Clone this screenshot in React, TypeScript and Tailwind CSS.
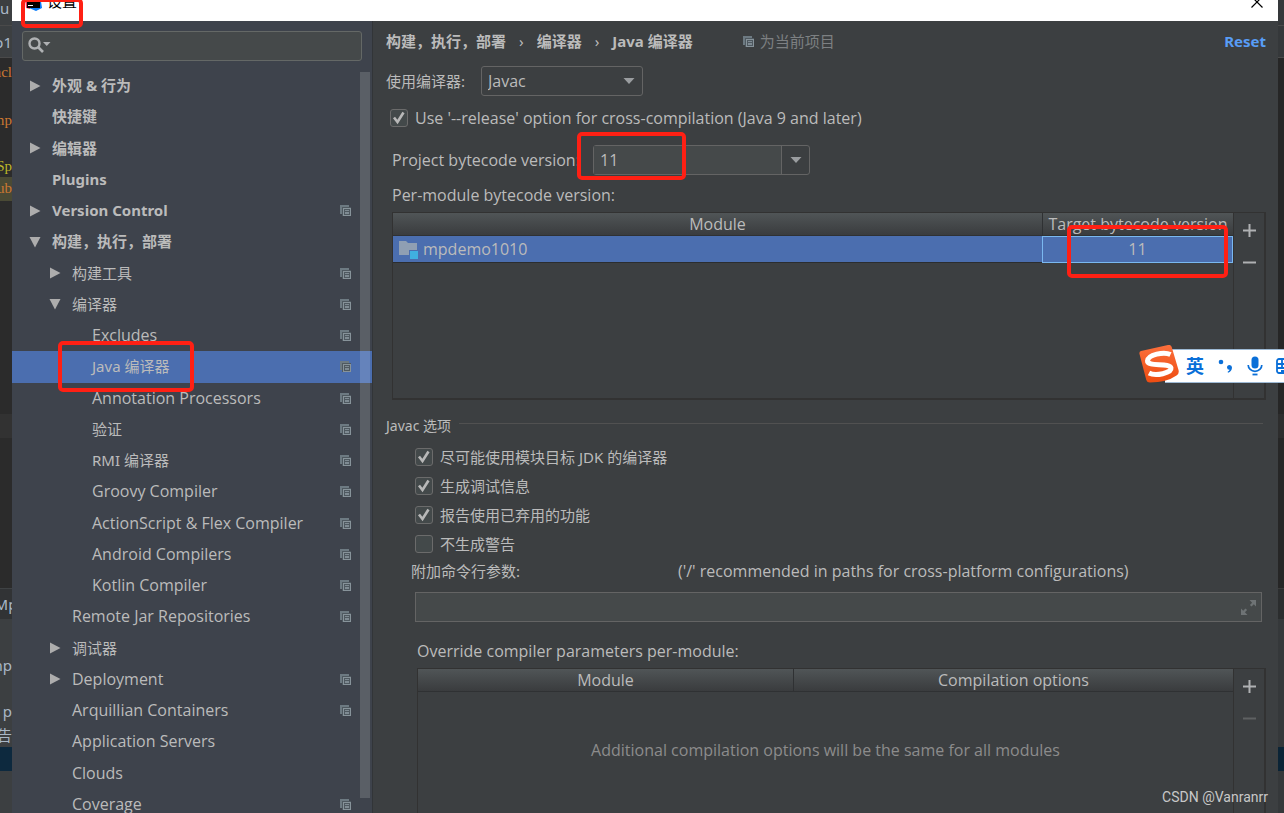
import { useState } from 'react'

interface TreeItem {
  label: string
  level: 0 | 1 | 2
  arrow?: 'open' | 'closed'
  project?: boolean
}

const treeItems: TreeItem[] = [
  { label: '外观 & 行为', level: 0, arrow: 'closed' },
  { label: '快捷键', level: 0 },
  { label: '编辑器', level: 0, arrow: 'closed' },
  { label: 'Plugins', level: 0 },
  { label: 'Version Control', level: 0, arrow: 'closed', project: true },
  { label: '构建，执行，部署', level: 0, arrow: 'open' },
  { label: '构建工具', level: 1, arrow: 'closed', project: true },
  { label: '编译器', level: 1, arrow: 'open', project: true },
  { label: 'Excludes', level: 2, project: true },
  { label: 'Java 编译器', level: 2, project: true },
  { label: 'Annotation Processors', level: 2, project: true },
  { label: '验证', level: 2, project: true },
  { label: 'RMI 编译器', level: 2, project: true },
  { label: 'Groovy Compiler', level: 2, project: true },
  { label: 'ActionScript & Flex Compiler', level: 2, project: true },
  { label: 'Android Compilers', level: 2, project: true },
  { label: 'Kotlin Compiler', level: 2, project: true },
  { label: 'Remote Jar Repositories', level: 1, project: true },
  { label: '调试器', level: 1, arrow: 'closed' },
  { label: 'Deployment', level: 1, arrow: 'closed', project: true },
  { label: 'Arquillian Containers', level: 1, project: true },
  { label: 'Application Servers', level: 1 },
  { label: 'Clouds', level: 1 },
  { label: 'Coverage', level: 1, project: true },
]

const levelPadding = {
  0: 'pl-[17px] font-bold',
  1: 'pl-[37px]',
  2: 'pl-[57px]',
}

const javacOptions = [
  { id: 'target-jdk', label: '尽可能使用模块目标 JDK 的编译器', checked: true },
  { id: 'debug-info', label: '生成调试信息', checked: true },
  { id: 'deprecated', label: '报告使用已弃用的功能', checked: true },
  { id: 'no-warnings', label: '不生成警告', checked: false },
]

// Chinese labels are set a pixel smaller than the English ones
const latinText = "font-['Open_Sans',sans-serif] text-[16px]"
const isLatin = (text: string) => /^[ -~]+$/.test(text)

function ProjectIcon() {
  return (
    <svg className="h-[11px] w-[11px] shrink-0" viewBox="0 0 11 11" fill="none" shapeRendering="crispEdges" aria-hidden="true">
      <path d="M0 0h9v2h-7v7h-2z" fill="#6d7a82" />
      <path d="M2 2h9v9h-9z" fill="#4f5960" />
      <path d="M3.500 3.500h7v7h-7z" stroke="#87939a" />
      <path d="M5 5.500h4M5 7.500h4M5 8.500h4" stroke="#7f8b93" />
    </svg>
  )
}

function TreeArrow({ state }: { state?: 'open' | 'closed' }) {
  return (
    <svg className="h-3 w-3 shrink-0" viewBox="0 0 12 12" fill="#adadad" aria-hidden="true">
      {state === 'closed' && <path d="M1 0.500v11l10.500-5.500z" />}
      {state === 'open' && <path d="M0.500 1h11l-5.500 10.500z" />}
    </svg>
  )
}

function DropArrow() {
  return (
    <svg className="h-[6px] w-3" viewBox="0 0 12 6" fill="#9a9da0" aria-hidden="true">
      <path d="M0.500 0h11l-5.500 6z" />
    </svg>
  )
}

function CheckBox({ id, label, defaultChecked }: { id: string; label: string; defaultChecked: boolean }) {
  return (
    <div className="flex items-center gap-[7px]">
      <span className="relative flex h-[18px] w-[18px] shrink-0">
        <input
          id={id}
          type="checkbox"
          defaultChecked={defaultChecked}
          className="peer h-[18px] w-[18px] appearance-none rounded-[3px] border border-[#6b6b6b] bg-[#43494a]"
        />
        <svg className="pointer-events-none absolute inset-0 hidden peer-checked:block" viewBox="0 0 18 18" fill="none" aria-hidden="true">
          <path d="M4 8.500l3.500 4.500 6-9.500" stroke="#b8b8b8" strokeWidth="2.600" />
        </svg>
      </span>
      <label htmlFor={id} className={isLatin(label) ? latinText : ''}>
        {label}
      </label>
    </div>
  )
}

function TableToolbar({ canRemove }: { canRemove: boolean }) {
  return (
    <div className="flex w-[31px] shrink-0 flex-col items-center border-l border-[#323232] pt-[9px]">
      <button aria-label="Add" className="flex h-4 w-4 items-center justify-center">
        <svg className="h-[13px] w-[13px]" viewBox="0 0 13 13" fill="#afb1b3" aria-hidden="true">
          <path d="M5.500 0h2v5.500h5.500v2h-5.500v5.500h-2v-5.500h-5.500v-2h5.500z" />
        </svg>
      </button>
      <button aria-label="Remove" disabled={!canRemove} className="mt-4 flex h-4 w-4 items-center justify-center">
        <svg className="h-[3px] w-[13px]" viewBox="0 0 13 3" fill={canRemove ? '#afb1b3' : '#5e6162'} aria-hidden="true">
          <path d="M0 0.500h13v2h-13z" />
        </svg>
      </button>
    </div>
  )
}

function TitleBar() {
  return (
    <header className="-mt-[18px] flex h-[39px] shrink-0 items-center bg-white pl-3 pr-[15px] text-sm text-black">
      <svg className="h-5 w-5" viewBox="0 0 20 20" aria-hidden="true">
        <path d="M4 3h12l2 13-6 3-7-3z" fill="#087cfa" />
        <path d="M1 5h5v12l-4-1z" fill="#fe315d" />
        <rect x="3" y="3" width="13" height="13" fill="#000" />
        <rect x="4" y="13" width="5" height="1" fill="#fff" />
      </svg>
      <h1 className="ml-[3px] text-[15px]">设置</h1>
      <button aria-label="Close" className="ml-auto">
        <svg className="h-3 w-3" viewBox="0 0 12 12" fill="none" stroke="#000" aria-hidden="true">
          <path d="M0.500 0.500l11 11M11.500 0.500l-11 11" strokeWidth="1.200" />
        </svg>
      </button>
    </header>
  )
}

function Sidebar() {
  const [selected, setSelected] = useState('Java 编译器')

  return (
    <nav className="relative w-[361px] shrink-0 overflow-hidden border-r border-[#323538] bg-[#3e434c] pt-[10px]">
      <div className="relative ml-[10px] mr-[10px] h-[30px]">
        <input
          aria-label="Search settings"
          className="h-full w-full rounded-[3px] border border-[#646866] bg-[#45494a] pl-8 text-[#bbbbbb] outline-none"
        />
        <svg className="pointer-events-none absolute left-[6px] top-[6px] h-4 w-6" viewBox="0 0 24 16" fill="none" aria-hidden="true">
          <circle cx="6.500" cy="6.500" r="5" stroke="#afb1b3" strokeWidth="2.400" />
          <path d="M10 10l5 5" stroke="#afb1b3" strokeWidth="2.600" />
          <path d="M15 5h7.500l-3.750 4z" fill="#afb1b3" />
        </svg>
      </div>
      <ul className="mt-[9px] grid h-[750px] auto-rows-fr">
        {treeItems.map((item) => (
          <li key={item.label} className="flex">
            <button
              onClick={() => setSelected(item.label)}
              className={`flex w-full items-center pr-[21px] text-left ${levelPadding[item.level]} ${
                selected === item.label ? 'bg-[#4b6eaf]' : ''
              }`}
            >
              <TreeArrow state={item.arrow} />
              <span
                className={`ml-[11px] flex-1 whitespace-nowrap pb-px ${
                  item.level > 0 && isLatin(item.label) ? latinText : ''
                }`}
              >
                {item.label}
              </span>
              {item.project && <ProjectIcon />}
            </button>
          </li>
        ))}
      </ul>
      {/* Scrollbar thumb */}
      <div className="absolute bottom-[15px] right-[2px] top-[51px] w-[10px] bg-white/15" />
    </nav>
  )
}

const headCell =
  "h-[22px] border-b border-[#2f3133] bg-linear-to-b from-[#505557] to-[#3a3c3e] p-0 font-['Open_Sans',sans-serif] text-[16px] font-normal leading-[22px]"

function ModuleTable() {
  return (
    <div className="ml-[19px] mr-[12px] flex h-[188px] shrink-0 border border-b-2 border-r-2 border-[#323232]">
      <div className="min-w-0 flex-1">
        <table className={`w-full table-fixed border-separate border-spacing-0 ${latinText}`}>
          <thead>
            <tr>
              <th className={headCell}>Module</th>
              <th className={`${headCell} w-[191px] whitespace-nowrap border-l border-l-[#2f3133]`}>Target bytecode version</th>
            </tr>
          </thead>
          <tbody className="bg-[#4b6eaf]">
            <tr>
              <td className="h-[27px] border-b border-[#2b2d2f] p-0 leading-[26px]">
                <span className="flex items-center gap-[5px] pl-[6px]">
                  <svg className="h-[19px] w-[19px]" viewBox="0 0 19 19" aria-hidden="true">
                    <path d="M0 1h7l2 2h9v7h-8v5H0z" fill="#8f9fb3" />
                    <rect x="11" y="11" width="8" height="8" fill="#40b0e0" />
                  </svg>
                  mpdemo1010
                </span>
              </td>
              <td className="h-[27px] border border-[#7ab8f0] p-0 text-center leading-[25px]">11</td>
            </tr>
          </tbody>
        </table>
      </div>
      <TableToolbar canRemove />
    </div>
  )
}

function OverrideTable() {
  return (
    <div className="ml-[44px] mr-[12px] flex min-h-[146px] flex-1 border border-b-0 border-r-2 border-[#323232]">
      <div className="min-w-0 flex-1">
        <table className={`w-full table-fixed border-separate border-spacing-0 ${latinText}`}>
          <thead>
            <tr>
              <th className={`${headCell} w-[46%]`}>Module</th>
              <th className={`${headCell} border-l border-l-[#2f3133]`}>Compilation options</th>
            </tr>
          </thead>
          <tbody>
            <tr>
              <td colSpan={2} className="h-[116px] p-0 text-center text-[#8c8c8c]">
                Additional compilation options will be the same for all modules
              </td>
            </tr>
          </tbody>
        </table>
      </div>
      <TableToolbar canRemove={false} />
    </div>
  )
}

function CompilerPage() {
  return (
    <main className="flex min-w-0 flex-1 flex-col overflow-hidden bg-[#3c3f41]">
      <div className="flex h-10 shrink-0 items-center pl-[13px] pr-[12px]">
        <div className="flex items-center gap-[13px] font-bold">
          <span>构建，执行，部署</span>
          <span className="font-normal">›</span>
          <span>编译器</span>
          <span className="font-normal">›</span>
          <span>Java 编译器</span>
        </div>
        <div className="ml-[50px] flex items-center gap-[6px] text-[#7d8082]">
          <ProjectIcon />
          <span>为当前项目</span>
        </div>
        <a href="#reset" className="ml-auto font-bold text-[#589df6]">Reset</a>
      </div>

      <div className="mt-[5px] flex h-[30px] shrink-0 items-center pl-[13px]">
        <label htmlFor="compiler">使用编译器:</label>
        <div className="relative ml-4 h-full w-[162px]">
          <select
            id="compiler"
            className={`h-full w-full appearance-none rounded-[3px] border border-[#646464] bg-[#3c3f41] pl-[6px] ${latinText}`}
          >
            <option>Javac</option>
            <option>Eclipse</option>
          </select>
          <span className="pointer-events-none absolute right-2 top-3">
            <DropArrow />
          </span>
        </div>
      </div>

      <div className="mt-[11px] pl-[17px]">
        <CheckBox id="release" label="Use '--release' option for cross-compilation (Java 9 and later)" defaultChecked />
      </div>

      <div className={`mt-4 flex h-[30px] shrink-0 items-center pl-[19px] ${latinText}`}>
        <label htmlFor="bytecode" className="w-[201px]">Project bytecode version:</label>
        <div className="flex h-full w-[217px] rounded-[3px] border border-[#646464]">
          <input id="bytecode" defaultValue="11" className="min-w-0 flex-1 bg-[#45494a] pl-[6px] outline-none" />
          <button aria-label="Show versions" className="flex w-7 items-center justify-center border-l border-[#646464]">
            <DropArrow />
          </button>
        </div>
      </div>

      <h2 className={`mb-[5px] mt-2 pl-[19px] leading-6 ${latinText}`}>Per-module bytecode version:</h2>
      <ModuleTable />

      <div className="mt-4 flex shrink-0 items-center gap-2 pl-[13px] pr-[15px] text-[14px] leading-5">
        <h2>Javac 选项</h2>
        <span className="mb-[5px] h-px flex-1 bg-[#515151]" />
      </div>
      <div className="mt-[10px] flex flex-col gap-[7px] pl-[42px]">
        {javacOptions.map((option) => (
          <CheckBox key={option.id} id={option.id} label={option.label} defaultChecked={option.checked} />
        ))}
      </div>
      <div className="mt-[5px] flex pl-[38px]">
        <label htmlFor="params" className="w-[267px]">附加命令行参数:</label>
        <span className={`whitespace-nowrap ${latinText}`}>('/' recommended in paths for cross-platform configurations)</span>
      </div>
      <div className="relative ml-[42px] mr-4 mt-[10px] h-[30px] shrink-0">
        <input id="params" className="h-full w-full border border-[#646464] bg-[#45494a] pl-2 pr-8 outline-none" />
        <svg className="pointer-events-none absolute right-[6px] top-2 h-[15px] w-[15px]" viewBox="0 0 15 15" fill="#6e7375" aria-hidden="true">
          <path d="M8.500 0h6.500v6.500l-2.200-2.200-2.300 2.300-1.600-1.600 2.200-2.300z" />
          <path d="M6.500 15h-6.500v-6.500l2.200 2.200 2.300-2.300 1.600 1.600-2.200 2.300z" />
        </svg>
      </div>
      <h2 className={`mb-[5px] mt-[17px] pl-[44px] leading-6 ${latinText}`}>Override compiler parameters per-module:</h2>
      <OverrideTable />
    </main>
  )
}

// Slice of the editor window that stays visible left of the dialog
function EditorEdge() {
  return (
    <aside className="flex w-3 shrink-0 flex-col overflow-hidden whitespace-nowrap bg-[#2b2b2b] text-[#a9b7c6]">
      <div className="flex h-[26px] shrink-0 border-b border-[#4a4a4a] bg-[#3c3f41] leading-4">u</div>
      <div className="flex h-8 shrink-0 items-center justify-end border-b border-[#4a4a4a] bg-[#3c3f41]">o1</div>
      <div className="flex h-[119px] shrink-0 flex-col items-end font-['Liberation_Serif',serif] text-[#cc7832]">
        <span className="leading-7">acl</span>
        <span className="mt-5 leading-7">mp</span>
        <span className="mt-5 leading-6 text-[#bbb529]">Sp</span>
      </div>
      <div className="flex h-6 shrink-0 justify-end bg-[#4a4a35] font-['Liberation_Serif',serif] text-[#cc7832]">ub</div>
      <div className="mt-[213px] h-6 shrink-0 bg-[#323232]" />
      <div className="mt-[150px] flex h-[31px] shrink-0 items-center justify-center border-t border-[#3f4244] bg-[#313335]">Mp</div>
      <div className="flex h-[128px] shrink-0 flex-col items-end bg-[#3c3f41] pt-8">
        <span className="leading-7">mp</span>
        <span className="mt-5 leading-6">o p</span>
        <span className="leading-6">告</span>
      </div>
      <div className="h-6 shrink-0 bg-[#0d293e]" />
      <div className="flex-1 bg-[#3c3f41]" />
    </aside>
  )
}

function EditorRightEdge() {
  return (
    <aside className="flex w-[6px] shrink-0 flex-col bg-[#262626]">
      <div className="h-[26px] border-b border-[#4a4a4a] bg-[#35383a]" />
      <div className="h-8 border-b border-[#4a4a4a] bg-[#35383a]" />
      <div className="mt-[356px] h-6 bg-[#2d2d2d]" />
      <div className="mt-[150px] h-[31px] border-t border-[#3a3a3a] bg-[#2b2d2e]" />
      <div className="h-[128px] bg-[#35383a]" />
      <div className="h-6 bg-[#0b2436]" />
      <div className="flex-1 bg-[#35383a]" />
    </aside>
  )
}

function InputMethodBar() {
  return (
    <div className="absolute right-0 top-[345px] flex h-[38px] w-[145px] items-end">
      <div className="ml-[26px] flex h-[34px] flex-1 items-center overflow-hidden border-y border-[#9db9d4] bg-white pl-[21px] font-bold text-[#0a6fd8]">
        <span className="text-[18px] leading-6">英</span>
        <svg className="ml-[14px] h-4 w-4 shrink-0" viewBox="0 0 16 16" fill="#0a6fd8" aria-hidden="true">
          <circle cx="3" cy="4" r="2.300" />
          <path d="M9 9.500a2.500 2.500 0 0 1 5 0c0 2.500-1.500 4.500-4 5.200l-.4-1c1.200-.5 1.800-1.100 2-1.900a2.500 2.500 0 0 1-2.600-2.300z" />
        </svg>
        <svg className="ml-[13px] h-5 w-4 shrink-0" viewBox="0 0 16 20" fill="none" aria-hidden="true">
          <rect x="4.500" y="0.500" width="7" height="12" rx="3.500" fill="#0a6fd8" />
          <path d="M1.200 9a6.800 6.300 0 0 0 13.600 0" stroke="#0a6fd8" strokeWidth="1.700" />
          <path d="M5.500 18.500h5" stroke="#0a6fd8" strokeWidth="1.800" />
        </svg>
        <svg className="ml-[13px] h-4 w-5 shrink-0" viewBox="0 0 20 16" fill="none" stroke="#0a6fd8" strokeWidth="1.800" aria-hidden="true">
          <rect x="1" y="1" width="18" height="14" rx="2" />
          <path d="M1 6h18M1 10h18M6 1v9M11 1v9M5 13h10" />
        </svg>
      </div>
      <svg className="absolute left-0 top-0 h-[38px] w-10" viewBox="0 0 40 38" aria-hidden="true">
        <defs>
          <linearGradient id="sogou" x1="0" y1="0" x2="0" y2="1">
            <stop offset="0" stopColor="#fb6f3c" />
            <stop offset="1" stopColor="#ee4d12" />
          </linearGradient>
        </defs>
        <path d="M2 6L29 0q3-.5 3.700 2L39.500 25q1 3.500-2 5.500-10 7-26.500 7-3 0-3.700-2.500L.5 9Q0 6.500 2 6z" fill="url(#sogou)" />
        <path
          d="M31.500 9.500C25 6.500 9 9.500 8.500 16c-.4 6 22.500 1.500 23.500 7 .8 5-15.500 8.500-22 5"
          fill="none"
          stroke="#fff"
          strokeWidth="5"
        />
      </svg>
    </div>
  )
}

const redBox = 'pointer-events-none absolute rounded-[5px] border-4 border-[#ff2014]'

export default function App() {
  return (
    <div className="relative flex h-screen overflow-hidden bg-[#2b2b2b] font-['Noto_Sans','Noto_Sans_CJK_SC',sans-serif] text-[15px] leading-[22px] text-[#bbbbbb]">
      <EditorEdge />
      <div className="flex min-w-0 flex-1 flex-col">
        <TitleBar />
        <div className="flex min-h-0 flex-1">
          <Sidebar />
          <CompilerPage />
        </div>
      </div>
      <EditorRightEdge />

      {/* Highlights */}
      <div className={`${redBox} -top-[2px] left-[21px] h-[30px] w-[62px]`} />
      <div className={`${redBox} left-[58px] top-[341px] h-[51px] w-[136px]`} />
      <div className={`${redBox} left-[577px] top-[132px] h-[48px] w-[109px]`} />
      <div className={`${redBox} right-[56px] top-[225px] h-[53px] w-[161px]`} />

      <InputMethodBar />
      <span className="absolute bottom-[6px] right-4 font-['Roboto',sans-serif] text-[14px] leading-5 text-[#c8c8c8]">CSDN @Vanranrr</span>
    </div>
  )
}
